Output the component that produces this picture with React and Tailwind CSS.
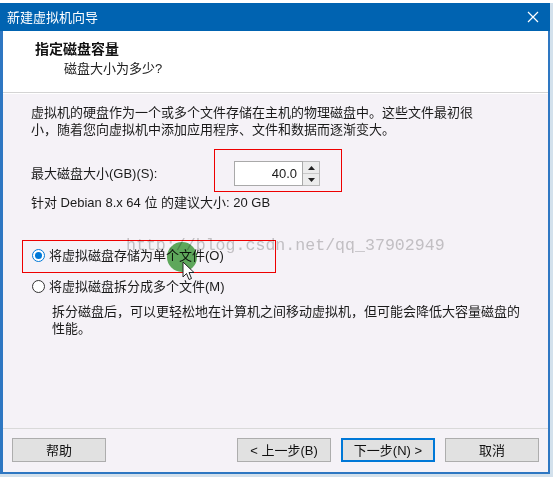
import React from "react";

const font = "font-['Liberation_Sans','Noto_Sans_CJK_SC',sans-serif]";

function Radio({ checked }) {
  return (
    <span
      className={
        "w-[13px] h-[13px] rounded-full border bg-white flex items-center justify-center shrink-0 " +
        (checked ? "border-[#0078d7]" : "border-[#333333]")
      }
    >
      {checked && <span className="w-[7px] h-[7px] rounded-full bg-[#0078d7]" />}
    </span>
  );
}

function Button({ children, primary }) {
  return (
    <div
      className={
        "w-[94px] h-[24px] flex items-center justify-center bg-[#e1e1e1] text-[13px] leading-none text-[#111] " +
        (primary ? "border-2 border-[#0078d7]" : "border border-[#adadad]")
      }
    >
      {children}
    </div>
  );
}

export default function App() {
  return (
    <div className={"relative w-[553px] h-[477px] overflow-hidden bg-[#d3e1ec] " + font}>
      {/* background window behind the dialog */}
      <div className="h-[3px] overflow-hidden bg-white">
        <div className="ml-[188px] -mt-[37px] text-[46px] font-bold leading-[40px] text-black tracking-[2px]">
          Workstation
        </div>
      </div>

      {/* dialog */}
      <div className="w-[550px] flex flex-col">
        {/* title bar */}
        <div className="h-[28px] bg-[#0063b1] flex items-center justify-between pl-[7px] pr-[11px]">
          <span className="text-[13px] leading-none text-white">新建虚拟机向导</span>
          <svg width="12" height="12" viewBox="0 0 12 12">
            <path d="M1 1 L11 11 M11 1 L1 11" stroke="#ffffff" strokeWidth="1.2" />
          </svg>
        </div>

        <div className="border-l-[3px] border-r-2 border-b-2 border-[#2e77c2] flex flex-col">
          {/* header */}
          <div className="h-[61px] bg-white flex flex-col pt-[10px]">
            <div className="pl-[32px] text-[14px] leading-[17px] font-bold text-[#111]">指定磁盘容量</div>
            <div className="pl-[61px] mt-[2px] text-[13px] leading-[17px] text-[#222]">磁盘大小为多少?</div>
          </div>
          <div className="h-px bg-[#d4d4d4]" />
          <div className="h-px bg-white" />

          {/* body */}
          <div className="h-[334px] bg-[#f5f2f7] flex flex-col pt-[10px] text-[13px] leading-[17px] text-[#1a1a1a]">
            <div className="pl-[28px] pr-[60px]">
              <p>虚拟机的硬盘作为一个或多个文件存储在主机的物理磁盘中。这些文件最初很</p>
              <p>小，随着您向虚拟机中添加应用程序、文件和数据而逐渐变大。</p>
            </div>

            <div className="mt-[23px] pl-[28px] flex items-center h-[25px]">
              <span className="w-[203px]">最大磁盘大小(GB)(S):</span>
              <div className="w-[69px] h-[25px] bg-white border border-[#a9a9a9] flex items-center justify-end pr-[5px]">
                40.0
              </div>
              <div className="w-[17px] h-[25px] border border-l-0 border-[#b9b9b9] bg-[#ececec] flex flex-col">
                <div className="flex-1 flex items-center justify-center border-b border-[#c8c8c8]">
                  <svg width="7" height="4" viewBox="0 0 7 4">
                    <path d="M0 4 L3.5 0 L7 4 Z" fill="#222" />
                  </svg>
                </div>
                <div className="flex-1 flex items-center justify-center">
                  <svg width="7" height="4" viewBox="0 0 7 4">
                    <path d="M0 0 L7 0 L3.5 4 Z" fill="#222" />
                  </svg>
                </div>
              </div>
            </div>

            <div className="mt-[8px] pl-[28px]">针对 Debian 8.x 64 位 的建议大小: 20 GB</div>

            <div className="mt-[36px] pl-[29px] flex items-center gap-[4px] h-[17px]">
              <Radio checked />
              <span>将虚拟磁盘存储为单个文件(O)</span>
            </div>
            <div className="mt-[14px] pl-[29px] flex items-center gap-[4px] h-[17px]">
              <Radio />
              <span>将虚拟磁盘拆分成多个文件(M)</span>
            </div>
            <div className="mt-[8px] pl-[49px] pr-[10px]">
              <p>拆分磁盘后，可以更轻松地在计算机之间移动虚拟机，但可能会降低大容量磁盘的</p>
              <p>性能。</p>
            </div>
          </div>

          <div className="h-px bg-[#d9d9d9]" />

          {/* footer */}
          <div className="h-[43px] bg-[#f5f2f7] flex items-start justify-between pt-[9px] pl-[9px] pr-[9px]">
            <Button>帮助</Button>
            <div className="flex gap-[10px]">
              <Button>&lt; 上一步(B)</Button>
              <Button primary>下一步(N) &gt;</Button>
              <Button>取消</Button>
            </div>
          </div>
        </div>
      </div>

      {/* annotations over the screenshot */}
      <div className="absolute left-[214px] top-[149px] w-[128px] h-[43px] border border-[#ee0000]" />
      <div className="absolute left-[22px] top-[240px] w-[254px] h-[33px] border border-[#ee0000]" />
      <div className="absolute left-[126px] top-[236px] text-[16.6px] leading-[20px] text-[#cacaca] mix-blend-multiply font-['Liberation_Mono',monospace] pointer-events-none">
        http://blog.csdn.net/qq_37902949
      </div>
      <div className="absolute left-[167px] top-[242px] w-[30px] h-[30px] rounded-full bg-[#62b05e] mix-blend-multiply" />
      <svg className="absolute left-[182px] top-[261px]" width="14" height="21" viewBox="0 0 14 21">
        <path d="M1 1 L1 16 L4.5 12.5 L7 18.5 L9.5 17.5 L7 11.5 L12 11.5 Z" fill="#ffffff" stroke="#222" strokeWidth="1" strokeLinejoin="round" />
      </svg>
    </div>
  );
}
